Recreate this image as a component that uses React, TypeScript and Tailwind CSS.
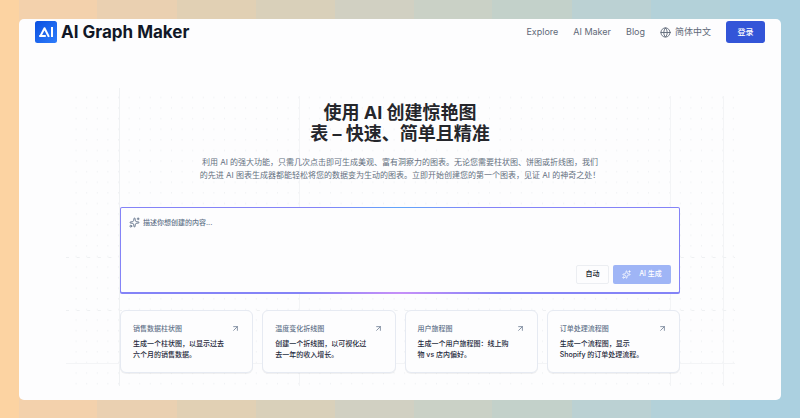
import { ArrowUpRight, Globe, Sparkles } from "lucide-react";

interface Example {
  title: string;
  lines: [string, string];
}

const NAV_LINKS = ["Explore", "AI Maker", "Blog"];

const EXAMPLES: Example[] = [
  { title: "销售数据柱状图", lines: ["生成一个柱状图，以显示过去", "六个月的销售数据。"] },
  { title: "温度变化折线图", lines: ["创建一个折线图，以可视化过", "去一年的收入增长。"] },
  { title: "用户旅程图", lines: ["生成一个用户旅程图：线上购", "物 vs 店内偏好。"] },
  { title: "订单处理流程图", lines: ["生成一个流程图，显示", "Shopify 的订单处理流程。"] },
];

function Logo() {
  return (
    <svg viewBox="0 0 22 22" className="size-[22px] shrink-0" aria-hidden="true">
      <defs>
        <linearGradient id="logo-bg" x1="0" y1="0" x2="1" y2="1">
          <stop offset="0" stopColor="#0a4fe0" />
          <stop offset="1" stopColor="#2f7dfb" />
        </linearGradient>
      </defs>
      <rect width="22" height="22" rx="2.5" fill="url(#logo-bg)" />
      <path
        d="M5.4 15.1 9.5 7.2l4.4 8.7M4.2 15.1h6.6M17 6v10"
        fill="none"
        stroke="#fff"
        strokeWidth="2"
        strokeLinejoin="round"
      />
    </svg>
  );
}

// Faint dotted grid behind the hero, with a few solid guide lines
function GridBackdrop() {
  return (
    <svg
      viewBox="0 0 670 298"
      className="pointer-events-none absolute top-[69px] left-1/2 w-[670px] -translate-x-1/2"
      aria-hidden="true"
    >
      <defs>
        <pattern id="dots" width="10.6" height="10.6" patternUnits="userSpaceOnUse">
          <rect x="0" y="9" width="1" height="1" fill="#e9ebee" />
        </pattern>
      </defs>
      <rect x="1" y="8" width="669" height="290" fill="url(#dots)" />
      <g stroke="#f3f4f6" strokeWidth="1">
        <path d="M54.5 0v298" stroke="#eff1f3" />
        <path d="M234.5 8v290M605.5 8v290M658.5 8v290M1 275.5h669" />
        <path d="M1 169.5h669M1 222.5h669" stroke="#eef0f2" strokeDasharray="3 7.6" />
      </g>
    </svg>
  );
}

function Header() {
  return (
    <header className="flex items-center justify-between px-4 pt-[2px]">
      <a href="#" className="flex items-center gap-1 text-[17px] leading-[22px] font-bold text-[#111827]">
        <Logo />
        AI Graph Maker
      </a>
      <nav className="flex items-center gap-[15px] text-[9px] text-[#5f6978]">
        {NAV_LINKS.map((link) => (
          <a key={link} href="#">
            {link}
          </a>
        ))}
        <button className="flex items-center gap-1">
          <Globe size={11} strokeWidth={2} />
          简体中文
        </button>
        <button className="h-[22px] w-[39px] rounded-[3px] bg-[#3355d8] text-[8px] font-medium text-white">
          登录
        </button>
      </nav>
    </header>
  );
}

function PromptBox() {
  return (
    <form
      className="mt-6 rounded-[2px] bg-[#8483f7] bg-[radial-gradient(ellipse_80px_20px_at_50%_0%,#60a5fa,transparent),radial-gradient(ellipse_100px_20px_at_50%_100%,#c890f8,transparent)] px-px pt-px pb-[2px]"
      onSubmit={(e) => e.preventDefault()}
    >
      <div className="flex h-[84px] flex-col rounded-[1px] bg-[#fdfdfe] px-2 pt-[9px] pb-2">
        <label className="flex flex-1 items-start gap-[3px]">
          <Sparkles size={11} strokeWidth={2} className="shrink-0 text-[#64748b]" />
          <textarea
            aria-label="描述你想创建的内容"
            placeholder="描述你想创建的内容..."
            className="h-full flex-1 resize-none bg-transparent text-[7px] leading-[11px] outline-none placeholder:font-medium placeholder:text-[#64748b]"
          />
        </label>
        <div className="flex justify-end gap-1">
          <button
            type="button"
            className="h-[19px] w-[33px] rounded-[2px] border border-[#eceef2] text-[7px] font-medium text-[#111827]"
          >
            自动
          </button>
          <button
            type="submit"
            className="flex h-[19px] w-[58px] items-center justify-center gap-2 rounded-[2px] bg-[#9fb5f6] text-[7px] font-medium text-white"
          >
            <Sparkles size={9} strokeWidth={2} />
            AI 生成
          </button>
        </div>
      </div>
    </form>
  );
}

function ExampleCard({ title, lines }: Example) {
  return (
    <button className="flex h-[63px] flex-col rounded-[6px] border border-[#e6eaf2] bg-[#fdfdfe] px-3 pt-3 text-left shadow-2xs">
      <span className="flex w-full items-center justify-between text-[7px] leading-[11px] font-medium text-[#64748b]">
        {title}
        <ArrowUpRight size={9} strokeWidth={2} />
      </span>
      <span className="mt-1 text-[7px] leading-[11px] font-medium text-[#1e293b]">
        {lines[0]}
        <br />
        {lines[1]}
      </span>
    </button>
  );
}

function App() {
  return (
    <div className="min-h-screen bg-[linear-gradient(90deg,#fcd3a2_19px,#f3d1ac_19px_97px,#ead0b1_97px_177px,#e1d0b4_177px_256px,#d9d0ba_256px_335px,#d1d0c2_335px_414px,#cad1c6_414px_492px,#c3d1ca_492px_572px,#bbd1d3_572px_651px,#b3d1d9_651px_730px,#abd0e0_730px)] px-[19px] pt-[19px] pb-[18px] font-['Inter','Noto_Sans_CJK_SC',sans-serif]">
      <div className="relative min-h-[381px] overflow-hidden rounded-[5px] bg-[#fdfdfe]">
        <GridBackdrop />
        <div className="relative">
          <Header />
          <main className="mx-auto mt-[59px] max-w-[560px]">
            <h1 className="text-center text-[18px] leading-[21px] font-bold text-[#25262b]">
              使用 AI 创建惊艳图
              <br />表 – 快速、简单且精准
            </h1>
            <p className="mt-3 text-center text-[8px] leading-[13px] text-[#64707f]">
              利用 AI 的强大功能，只需几次点击即可生成美观、富有洞察力的图表。无论您需要柱状图、饼图或折线图，我们
              <br />
              的先进 AI 图表生成器都能轻松将您的数据变为生动的图表。立即开始创建您的第一个图表，见证 AI 的神奇之处！
            </p>
            <div className="pt-px">
              <PromptBox />
            </div>
            <div className="mt-4 grid grid-cols-4 gap-[9px]">
              {EXAMPLES.map((example) => (
                <ExampleCard key={example.title} {...example} />
              ))}
            </div>
          </main>
        </div>
      </div>
    </div>
  );
}

export default App;
